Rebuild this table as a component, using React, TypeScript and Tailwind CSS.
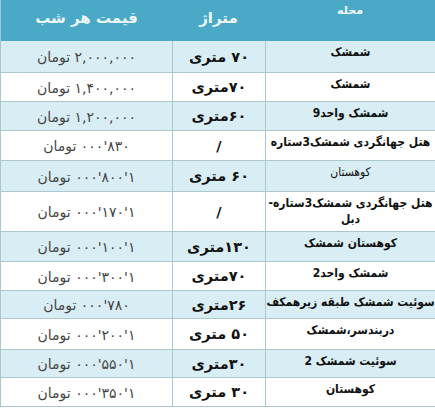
import React from "react";

type Row = {
  m: React.ReactNode;
  mBold: boolean;
  s: string;
  p: string;
  h: string;
  shade: boolean;
};

const rows: Row[] = [
  { m: "شمشک", mBold: true, s: "۷۰ متری", p: "۲,۰۰۰,۰۰۰ تومان", h: "h-[32px]", shade: true },
  { m: "شمشک", mBold: true, s: "۷۰متری", p: "۱,۴۰۰,۰۰۰ تومان", h: "h-[29px]", shade: false },
  { m: "شمشک واحد9", mBold: true, s: "۶۰متری", p: "۱,۲۰۰,۰۰۰ تومان", h: "h-[29px]", shade: true },
  { m: "هتل جهانگردی شمشک3ستاره", mBold: true, s: "/", p: "۸۳۰'۰۰۰ تومان", h: "h-[30px]", shade: false },
  { m: "کوهستان", mBold: false, s: "۶۰ متری", p: "۱'۸۰۰'۰۰۰ تومان", h: "h-[31px]", shade: true },
  {
    m: (
      <>
        <span className="block whitespace-nowrap">هتل جهانگردی شمشک3ستاره-</span>
        <span className="block">دبل</span>
      </>
    ),
    mBold: true,
    s: "/",
    p: "۱'۱۷۰'۰۰۰ تومان",
    h: "h-[40px]",
    shade: false,
  },
  { m: "کوهستان شمشک", mBold: true, s: "۱۳۰متری", p: "۱'۱۰۰'۰۰۰ تومان", h: "h-[30px]", shade: true },
  { m: "شمشک واحد2", mBold: true, s: "۷۰متری", p: "۱'۳۰۰'۰۰۰ تومان", h: "h-[29px]", shade: false },
  { m: "سوئیت شمشک طبقه زیرهمکف", mBold: true, s: "۲۶متری", p: "۷۸۰'۰۰۰ تومان", h: "h-[28px]", shade: true },
  { m: "دربندسر،شمشک", mBold: true, s: "۵۰ متری", p: "۱'۲۰۰'۰۰۰ تومان", h: "h-[31px]", shade: false },
  { m: "سوئیت شمشک 2", mBold: true, s: "۳۰متری", p: "۱'۵۵۰'۰۰۰ تومان", h: "h-[28px]", shade: true },
  { m: "کوهستان", mBold: true, s: "۳۰ متری", p: "۱'۳۵۰'۰۰۰ تومان", h: "h-[29px]", shade: false },
];

export default function App() {
  return (
    <div
      className="w-[435px] h-[415px] bg-white overflow-hidden"
      style={{ fontFamily: '"DejaVu Sans", "Noto Sans", sans-serif' }}
    >
      <div className="w-[435px] border-l border-[#a9c6d1]">
        {/* header */}
        <div className="flex h-[41px] bg-[#4aa9c7] text-[#eef8fb] font-bold">
          <div className="w-[171px] flex justify-center pt-[7px] text-[15px]" dir="rtl">
            قیمت هر شب
          </div>
          <div className="w-[93px] flex justify-center pt-[7px] text-[15px]" dir="rtl">
            متراژ
          </div>
          <div className="flex-1 flex justify-center pt-[3px] text-[11px]" dir="rtl">
            محله
          </div>
        </div>
        {rows.map((r, i) => (
          <div
            key={i}
            className={`flex ${r.h} border-b border-[#a9c6d1] ${
              r.shade ? "bg-[#d9edf4]" : "bg-white"
            }`}
          >
            <div
              className="w-[171px] flex items-center justify-center text-[14px] text-[#444] pt-[2px] whitespace-nowrap"
              dir="rtl"
            >
              {r.p}
            </div>
            <div
              className="w-[93px] border-l border-[#a9c6d1] flex items-center justify-center text-[14.5px] font-bold text-[#111] pt-[2px] whitespace-nowrap"
              dir="rtl"
            >
              {r.s}
            </div>
            <div
              className={`flex-1 border-l border-[#a9c6d1] flex flex-col items-center text-center text-[12px] leading-[16px] text-[#111] pt-[3px] whitespace-nowrap ${
                r.mBold ? "font-bold" : "font-normal"
              }`}
              style={{ fontFamily: '"DejaVu Sans Condensed", "DejaVu Sans", sans-serif' }}
              dir="rtl"
            >
              {r.m}
            </div>
          </div>
        ))}
      </div>
    </div>
  );
}
